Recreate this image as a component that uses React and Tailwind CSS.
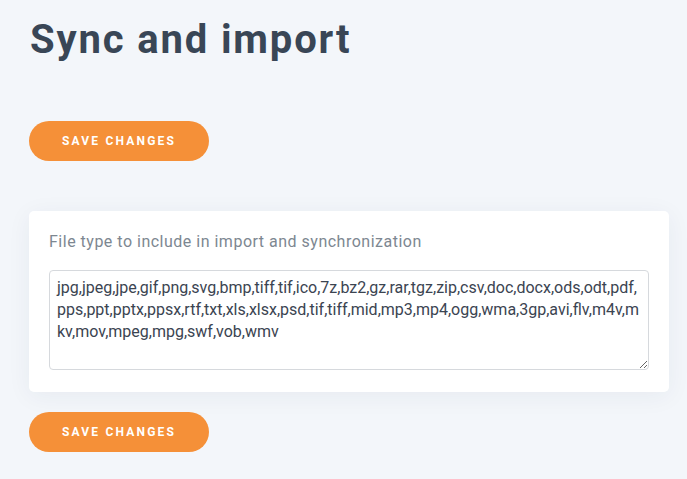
export default function App() {
  const types =
    "jpg,jpeg,jpe,gif,png,svg,bmp,tiff,tif,ico,7z,bz2,gz,rar,tgz,zip,csv,doc,docx,ods,odt,pdf,pps,ppt,pptx,ppsx,rtf,txt,xls,xlsx,psd,tif,tiff,mid,mp3,mp4,ogg,wma,3gp,avi,flv,m4v,mkv,mov,mpeg,mpg,swf,vob,wmv";
  return (
    <div
      className="min-h-[479px] bg-[#f3f6fa] pt-4 pl-[29px] pr-[18px] pb-6"
      style={{ fontFamily: "Roboto, 'Liberation Sans', sans-serif" }}
    >
      <h1 className="text-[40px] leading-[48px] font-bold tracking-[1.85px] text-[#394656] pl-[1px]">
        Sync and import
      </h1>
      <button className="mt-[57px] w-[180px] h-10 rounded-full bg-[#f59038] text-white text-[12px] font-bold tracking-[2.2px] uppercase">
        Save changes
      </button>
      <div className="mt-[50px] bg-white rounded-[5px] shadow-[0_4px_24px_rgba(30,50,90,0.06)] px-5 pt-[19px] pb-[22px]">
        <label className="block text-[16px] leading-[24px] text-[#7d8791] tracking-[0.5px]">
          File type to include in import and synchronization
        </label>
        <textarea
          className="mt-[16px] block w-full h-[100px] border border-[#d6d9dd] rounded-[4px] pl-[7px] pr-[4px] pt-[6px] pb-[4px] text-[16px] leading-[22px] text-[#3b4451] outline-none resize-y"
          style={{ fontFamily: "Roboto, 'Liberation Sans', sans-serif" }}
          defaultValue={types}
        />
      </div>
      <button className="mt-[20px] w-[180px] h-10 rounded-full bg-[#f59038] text-white text-[12px] font-bold tracking-[2.2px] uppercase">
        Save changes
      </button>
    </div>
  );
}
